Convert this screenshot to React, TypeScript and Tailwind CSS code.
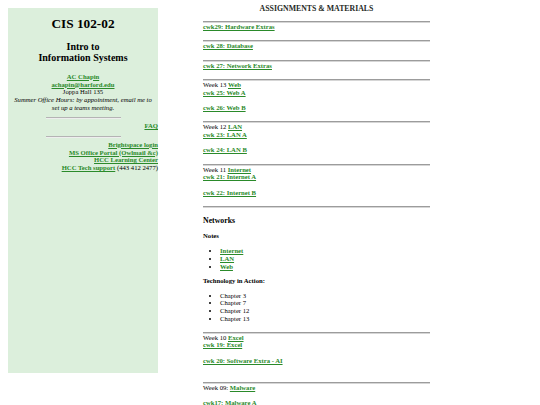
const link = "font-bold text-[#2a8a2a] underline";

function Hr({ className = "mt-[2px]" }: { className?: string }) {
  return <div className={`h-[2px] border-t border-b border-t-[#9c9c9c] border-b-[#d6d6d6] ${className}`} />;
}

function A({ children }: { children: React.ReactNode }) {
  return (
    <a href="#" className={link}>
      {children}
    </a>
  );
}

export default function App() {
  return (
    <div className="flex min-h-[405px] bg-white font-['Liberation_Serif',serif] text-[6.67px] leading-[7.67px] text-black">
      {/* Sidebar */}
      <aside className="mt-[8px] ml-[8px] h-[365px] w-[150px] shrink-0 bg-[#dcefdc] pt-[8px] text-center">
        <h1 className="text-[13.3px] font-bold leading-[15.3px]">CIS 102-02</h1>
        <h2 className="mt-[9.6px] text-[10px] font-bold leading-[11.5px]">
          Intro to
          <br />
          Information Systems
        </h2>
        <div className="mt-[9px]">
          <A>AC Chapin</A>
          <br />
          <A>achapin@harford.edu</A>
          <br />
          Joppa Hall 135
          <br />
          <i>
            Summer Office Hours: by appointment, email me to
            <br />
            set up a teams meeting.
          </i>
        </div>
        <div className="mx-auto mt-[6px] h-[2px] w-[75px] border-t border-b border-t-[#b4b4b4] border-b-[#eeeeee]" />
        <div className="mt-[3px] text-right">
          <A>FAQ</A>
        </div>
        <div className="mx-auto mt-[6px] h-[2px] w-[75px] border-t border-b border-t-[#b4b4b4] border-b-[#eeeeee]" />
        <div className="mt-[3px] text-right whitespace-nowrap">
          <A>Brightspace login</A>
          <br />
          <A>MS Office Portal (Owlmail &amp;c)</A>
          <br />
          <A>HCC Learning Center</A>
          <br />
          <A>HCC Tech support</A> (443 412 2477)
        </div>
      </aside>

      {/* Main column */}
      <main className="ml-[45px] w-[227px] shrink-0">
        <h3 className="mt-[3.5px] text-center text-[7.8px] font-bold leading-[9px] text-[#1f2a1f]">
          ASSIGNMENTS &amp; MATERIALS
        </h3>

        <Hr className="mt-[8.5px]" />
        <div>
          <A>cwk29: Hardware Extras</A>
          <br />
          <br />
        </div>

        <Hr />
        <div>
          <A>cwk 28: Database</A>
          <br />
          <br />
        </div>

        <Hr />
        <div>
          <A>cwk 27: Network Extras</A>
          <br />
          <br />
        </div>

        <Hr />
        <div>
          Week 13 <A>Web</A>
          <br />
          <A>cwk 25: Web A</A>
          <br />
          <br />
          <A>cwk 26: Web B</A>
          <br />
          <br />
        </div>

        <Hr />
        <div>
          Week 12 <A>LAN</A>
          <br />
          <A>cwk 23: LAN A</A>
          <br />
          <br />
          <A>cwk 24: LAN B</A>
          <br />
          <br />
        </div>

        <Hr />
        <div>
          Week 11 <A>Internet</A>
          <br />
          <A>cwk 21: Internet A</A>
          <br />
          <br />
          <A>cwk 22: Internet B</A>
          <br />
          <br />
        </div>

        <Hr />
        <div className="pb-[7.5px]">
          <h3 className="mt-[7.5px] text-[7.8px] font-bold leading-[9px]">Networks</h3>
          <h4 className="mt-[7.5px] font-bold">Notes</h4>
          <ul className="mt-[7.5px] list-disc pl-[17px]">
            <li>
              <A>Internet</A>
            </li>
            <li>
              <A>LAN</A>
            </li>
            <li>
              <A>Web</A>
            </li>
          </ul>
          <h4 className="mt-[7px] font-bold">Technology in Action:</h4>
          <ul className="mt-[6.6px] list-disc pl-[17px]">
            <li>Chapter 3</li>
            <li>Chapter 7</li>
            <li>Chapter 12</li>
            <li>Chapter 13</li>
          </ul>
        </div>

        <Hr />
        <div>
          Week 10 <A>Excel</A>
          <br />
          <A>cwk 19: Excel</A>
          <br />
          <br />
          <A>cwk 20: Software Extra - AI</A>
          <br />
          <br />
          <br />
        </div>

        <Hr />
        <div>
          Week 09: <A>Malware</A>
          <br />
          <br />
          <A>cwk17: Malware A</A>
          <br />
          <br />
        </div>
      </main>
    </div>
  );
}
